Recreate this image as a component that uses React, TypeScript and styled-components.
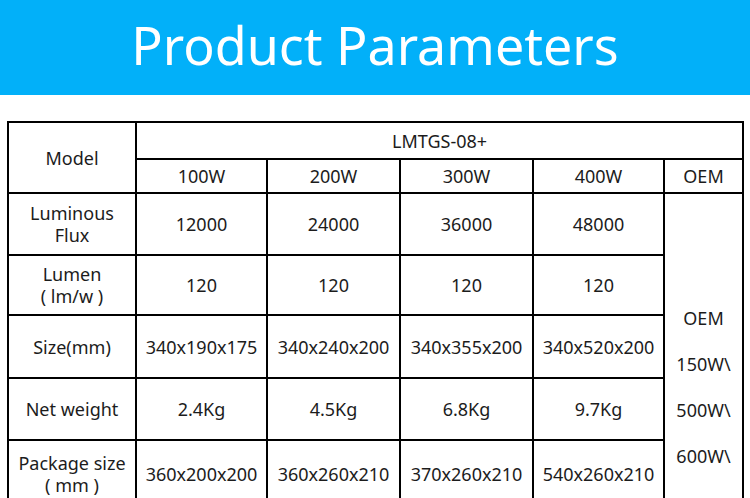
import React from 'react';
import styled, { createGlobalStyle } from 'styled-components';

const GlobalStyle = createGlobalStyle`
    html, body {
        margin: 0;
        padding: 0;
        background: #ffffff;
        overflow: hidden;
    }
    body {
        font-family: "Noto Sans", "Noto Sans CJK SC", sans-serif;
    }
`

const StyledPage = styled.div`
    width: 750px;
    height: 498px;
    overflow: hidden;
    display: flex;
    flex-direction: column;
`

const StyledBanner = styled.div`
    height: 95px;
    box-sizing: border-box;
    padding-bottom: 6px;
    background: #02b0f9;
    display: flex;
    align-items: center;
    justify-content: center;
    color: #ffffff;
    font-size: 52px;
    font-weight: 400;
    flex-shrink: 0;
`

const StyledTableWrap = styled.div`
    padding: 26px 8px 0 7px;
`

const StyledTable = styled.table`
    width: 735px;
    table-layout: fixed;
    border-collapse: collapse;
    color: #1c1c1c;
    font-size: 18px;
    td {
        border: 2px solid #000;
        text-align: center;
        vertical-align: middle;
        padding: 0;
        line-height: 22px;
    }
`

const StyledCol = styled.col<{ $w: number }>`
    width: ${p => p.$w}px;
`

const StyledRow = styled.tr<{ $h: number }>`
    height: ${p => p.$h}px;
`

const StyledLine = styled.div`
    line-height: 22px;
    white-space: pre;
`

const StyledOemCell = styled.td`
    && {
        padding-top: 72px;
    }
`

const StyledOemLine = styled.div`
    line-height: 46px;
`

type Spec = { label: string[]; values: string[]; h: number };

const specs: Spec[] = [
    { label: ['Luminous', 'Flux'], values: ['12000', '24000', '36000', '48000'], h: 62 },
    { label: ['Lumen', '( lm/w )'], values: ['120', '120', '120', '120'], h: 60 },
    { label: ['Size(mm)'], values: ['340x190x175', '340x240x200', '340x355x200', '340x520x200'], h: 63 },
    { label: ['Net weight'], values: ['2.4Kg', '4.5Kg', '6.8Kg', '9.7Kg'], h: 62 },
    { label: ['Package size', '( mm )'], values: ['360x200x200', '360x260x210', '370x260x210', '540x260x210'], h: 68 },
];

const colWidths = [128, 131, 133, 133, 131, 79];
const oemLines = ['OEM', '150W\\', '500W\\', '600W\\'];

const App = () => {
    return (
        <StyledPage>
            <GlobalStyle />
            <StyledBanner>Product Parameters</StyledBanner>
            <StyledTableWrap>
                <StyledTable>
                    <colgroup>
                        {colWidths.map((w, i) => <StyledCol $w={w} key={i} />)}
                    </colgroup>
                    <tbody>
                        <StyledRow $h={37}>
                            <td rowSpan={2}>Model</td>
                            <td colSpan={5}>LMTGS-08+</td>
                        </StyledRow>
                        <StyledRow $h={34}>
                            <td>100W</td>
                            <td>200W</td>
                            <td>300W</td>
                            <td>400W</td>
                            <td>OEM</td>
                        </StyledRow>
                        {specs.map((s, i) => (
                            <StyledRow $h={s.h} key={i}>
                                <td>
                                    {s.label.map((l, k) => <StyledLine key={k}>{l}</StyledLine>)}
                                </td>
                                {s.values.map((v, j) => <td key={j}>{v}</td>)}
                                {i === 0 && (
                                    <StyledOemCell rowSpan={specs.length}>
                                        {oemLines.map(l => <StyledOemLine key={l}>{l}</StyledOemLine>)}
                                    </StyledOemCell>
                                )}
                            </StyledRow>
                        ))}
                    </tbody>
                </StyledTable>
            </StyledTableWrap>
        </StyledPage>
    )
}

export default App;
